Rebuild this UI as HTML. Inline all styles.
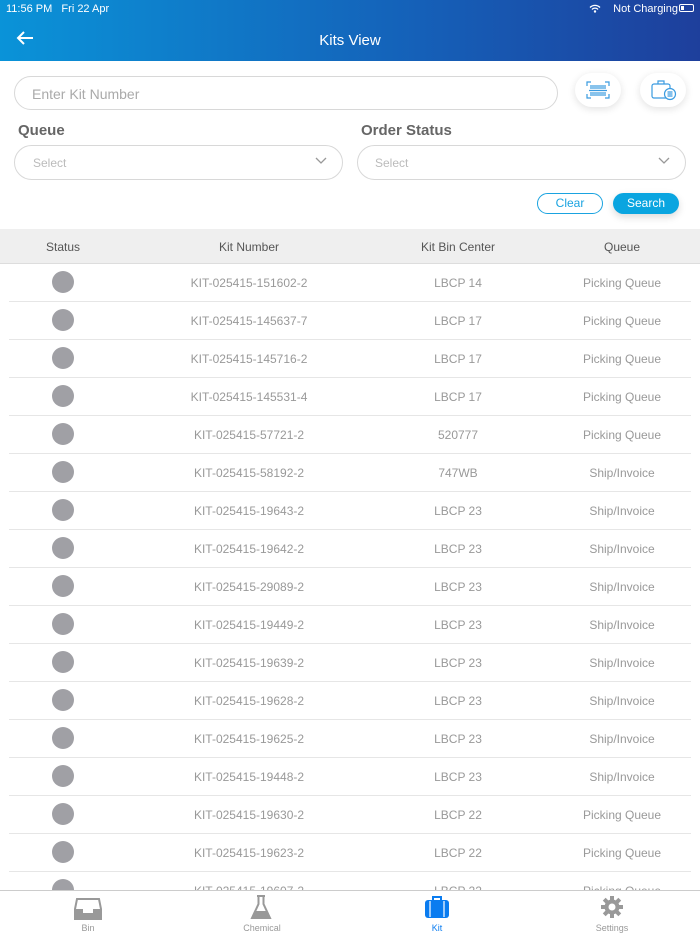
<!DOCTYPE html>
<html><head><meta charset="utf-8">
<style>
*{box-sizing:border-box;margin:0;padding:0}
body{width:700px;height:934px;overflow:hidden;background:#fff;font-family:"Liberation Sans",sans-serif;position:relative}
.nav{position:absolute;left:0;top:0;width:700px;height:61px;background:linear-gradient(90deg,#0a93d8,#1560b8 60%,#1e3f9c);color:#fff}
.sb{position:absolute;top:3px;font-size:11px}
.title{position:absolute;top:32px;width:100%;text-align:center;font-size:15px}
.inp{position:absolute;border:1px solid #d8d8d8;border-radius:18px;color:#aaa;font-size:14px}
.lbl{position:absolute;top:122px;font-size:15px;font-weight:bold;color:#666}
.btn{position:absolute;top:193px;height:21px;border-radius:11px;font-size:12px;text-align:center;line-height:19px}
.circ{position:absolute;width:46px;height:34px;border-radius:17px;background:#fff;box-shadow:0 2px 8px rgba(0,0,0,.12);top:73px}
.th{position:absolute;top:229px;left:0;width:700px;height:35px;background:#efefef;border-bottom:1px solid #ddd}
.th span,.row span{position:absolute;transform:translateX(-50%);white-space:nowrap}
.th span{top:11px;font-size:12px;color:#555}
.row{position:absolute;left:0;width:700px;height:38px}
.row::after{content:"";position:absolute;left:9px;right:9px;bottom:0;height:1px;background:#e6e6e6}
.row span{top:12px;font-size:12px;color:#999}
.dot{position:absolute;left:52px;top:7px;width:22px;height:22px;border-radius:50%;background:#a0a0a5}
.tab{position:absolute;top:890px;left:0;width:700px;height:44px;background:#fff;border-top:1px solid #ccc}
.ti{position:absolute;top:32px;font-size:9px;color:#999;transform:translateX(-50%)}
</style></head><body>
<div class="nav">
<div class="sb" style="left:6px">11:56 PM&nbsp;&nbsp;&nbsp;Fri 22 Apr</div>
<div class="sb" style="right:22px">Not Charging</div>
<div style="position:absolute;right:6px;top:4px;width:15px;height:8px;border:1px solid #fff;border-radius:2px"><div style="width:3px;height:4px;margin:1px;background:#fff"></div></div>
<svg style="position:absolute;left:589px;top:4px" width="12" height="9" viewBox="0 0 12 9"><path d="M1 3.5a7 7 0 0 1 10 0M3 5.5a4 4 0 0 1 6 0" stroke="#fff" stroke-width="1.3" fill="none"/><circle cx="6" cy="7.5" r="1.2" fill="#fff"/></svg>
<svg style="position:absolute;left:16px;top:31px" width="18" height="14" viewBox="0 0 18 14"><path d="M17 7H2M8 1L2 7l6 6" stroke="#fff" stroke-width="2" fill="none"/></svg>
<div class="title">Kits View</div>
</div>
<div class="inp" style="left:14px;top:76px;width:544px;height:34px;padding:9px 17px">Enter Kit Number</div>
<div class="circ" style="left:575px"><svg style="position:absolute;left:11px;top:8px" width="24" height="18" viewBox="0 0 24 18" fill="none" stroke="#3a9be0" stroke-width="1.2"><path d="M1 5V1h4M19 1h4v4M23 13v4h-4M5 17H1v-4"/><path d="M5 4v4M7 4v4M9 4v4M11 4v4M13 4v4M15 4v4M17 4v4M19 4v4M5 11v4M7 11v4M9 11v4M11 11v4M13 11v4M15 11v4M17 11v4M19 11v4M3 9.5h18"/></svg></div>
<div class="circ" style="left:640px"><svg style="position:absolute;left:11px;top:6px" width="26" height="22" viewBox="0 0 26 22" fill="none" stroke="#3a9be0" stroke-width="1.2"><rect x="1" y="5" width="18" height="14" rx="2"/><path d="M7 5V2h6v3"/><circle cx="19" cy="15" r="5.5" fill="#fff"/><path d="M16.5 13h5M16.5 15h5M16.5 17h5"/></svg></div>
<div class="lbl" style="left:18px">Queue</div>
<div class="lbl" style="left:361px">Order Status</div>
<div class="inp" style="left:14px;top:145px;width:329px;height:35px;padding:10px 18px;font-size:12px;color:#bbb">Select</div>
<div class="inp" style="left:357px;top:145px;width:329px;height:35px;padding:10px 17px;font-size:12px;color:#bbb">Select</div>
<svg style="position:absolute;left:315px;top:157px" width="12" height="8"><path d="M1 1l5 5 5-5" stroke="#999" stroke-width="1.3" fill="none"/></svg>
<svg style="position:absolute;left:658px;top:157px" width="12" height="8"><path d="M1 1l5 5 5-5" stroke="#999" stroke-width="1.3" fill="none"/></svg>
<div class="btn" style="left:537px;width:66px;border:1px solid #1aa3e0;color:#1aa3e0">Clear</div>
<div class="btn" style="left:613px;width:66px;background:#0aa5e0;color:#fff;line-height:21px;box-shadow:0 3px 8px rgba(0,0,0,.15)">Search</div>
<div class="th"><span style="left:63px">Status</span><span style="left:249px">Kit Number</span><span style="left:458px">Kit Bin Center</span><span style="left:622px">Queue</span></div>
<div class="row" style="top:264px"><div class="dot"></div><span style="left:249px">KIT-025415-151602-2</span><span style="left:458px">LBCP 14</span><span style="left:622px">Picking Queue</span></div>
<div class="row" style="top:302px"><div class="dot"></div><span style="left:249px">KIT-025415-145637-7</span><span style="left:458px">LBCP 17</span><span style="left:622px">Picking Queue</span></div>
<div class="row" style="top:340px"><div class="dot"></div><span style="left:249px">KIT-025415-145716-2</span><span style="left:458px">LBCP 17</span><span style="left:622px">Picking Queue</span></div>
<div class="row" style="top:378px"><div class="dot"></div><span style="left:249px">KIT-025415-145531-4</span><span style="left:458px">LBCP 17</span><span style="left:622px">Picking Queue</span></div>
<div class="row" style="top:416px"><div class="dot"></div><span style="left:249px">KIT-025415-57721-2</span><span style="left:458px">520777</span><span style="left:622px">Picking Queue</span></div>
<div class="row" style="top:454px"><div class="dot"></div><span style="left:249px">KIT-025415-58192-2</span><span style="left:458px">747WB</span><span style="left:622px">Ship/Invoice</span></div>
<div class="row" style="top:492px"><div class="dot"></div><span style="left:249px">KIT-025415-19643-2</span><span style="left:458px">LBCP 23</span><span style="left:622px">Ship/Invoice</span></div>
<div class="row" style="top:530px"><div class="dot"></div><span style="left:249px">KIT-025415-19642-2</span><span style="left:458px">LBCP 23</span><span style="left:622px">Ship/Invoice</span></div>
<div class="row" style="top:568px"><div class="dot"></div><span style="left:249px">KIT-025415-29089-2</span><span style="left:458px">LBCP 23</span><span style="left:622px">Ship/Invoice</span></div>
<div class="row" style="top:606px"><div class="dot"></div><span style="left:249px">KIT-025415-19449-2</span><span style="left:458px">LBCP 23</span><span style="left:622px">Ship/Invoice</span></div>
<div class="row" style="top:644px"><div class="dot"></div><span style="left:249px">KIT-025415-19639-2</span><span style="left:458px">LBCP 23</span><span style="left:622px">Ship/Invoice</span></div>
<div class="row" style="top:682px"><div class="dot"></div><span style="left:249px">KIT-025415-19628-2</span><span style="left:458px">LBCP 23</span><span style="left:622px">Ship/Invoice</span></div>
<div class="row" style="top:720px"><div class="dot"></div><span style="left:249px">KIT-025415-19625-2</span><span style="left:458px">LBCP 23</span><span style="left:622px">Ship/Invoice</span></div>
<div class="row" style="top:758px"><div class="dot"></div><span style="left:249px">KIT-025415-19448-2</span><span style="left:458px">LBCP 23</span><span style="left:622px">Ship/Invoice</span></div>
<div class="row" style="top:796px"><div class="dot"></div><span style="left:249px">KIT-025415-19630-2</span><span style="left:458px">LBCP 22</span><span style="left:622px">Picking Queue</span></div>
<div class="row" style="top:834px"><div class="dot"></div><span style="left:249px">KIT-025415-19623-2</span><span style="left:458px">LBCP 22</span><span style="left:622px">Picking Queue</span></div>
<div class="row" style="top:872px"><div class="dot"></div><span style="left:249px">KIT-025415-19607-2</span><span style="left:458px">LBCP 22</span><span style="left:622px">Picking Queue</span></div>
<div class="tab">
<svg style="position:absolute;left:74px;top:7px" width="28" height="22" viewBox="0 0 28 22"><path d="M3 1h22l2 10v10H1V11z" fill="none" stroke="#999" stroke-width="2"/><path d="M1 11h8v4h10v-4h8v10H1z" fill="#999"/></svg>
<div class="ti" style="left:88px">Bin</div>
<svg style="position:absolute;left:250px;top:4px" width="22" height="26" viewBox="0 0 22 26"><path d="M7 1h8M8.5 1v8L2 23h18L13.5 9V1" fill="none" stroke="#999" stroke-width="2"/><path d="M5 16h12l3 7H2z" fill="#999"/></svg>
<div class="ti" style="left:262px">Chemical</div>
<svg style="position:absolute;left:424px;top:5px" width="26" height="22" viewBox="0 0 26 22"><path d="M9 4V1h8v3" fill="none" stroke="#0a7cf0" stroke-width="2"/><rect x="1" y="4" width="24" height="18" rx="3" fill="#0a7cf0"/><path d="M6 5v16M20 5v16" stroke="#fff" stroke-width="1.2"/></svg>
<div class="ti" style="left:437px;color:#0a7cf0">Kit</div>
<svg style="position:absolute;left:601px;top:5px" width="22" height="22" viewBox="0 0 22 22"><g fill="#999"><circle cx="11" cy="11" r="7.5"/><rect x="9" y="0" width="4" height="22"/><rect x="0" y="9" width="22" height="4"/><rect x="9" y="0" width="4" height="22" transform="rotate(45 11 11)"/><rect x="9" y="0" width="4" height="22" transform="rotate(-45 11 11)"/></g><circle cx="11" cy="11" r="3.5" fill="#fff"/></svg>
<div class="ti" style="left:612px">Settings</div>
</div>
</body></html>
